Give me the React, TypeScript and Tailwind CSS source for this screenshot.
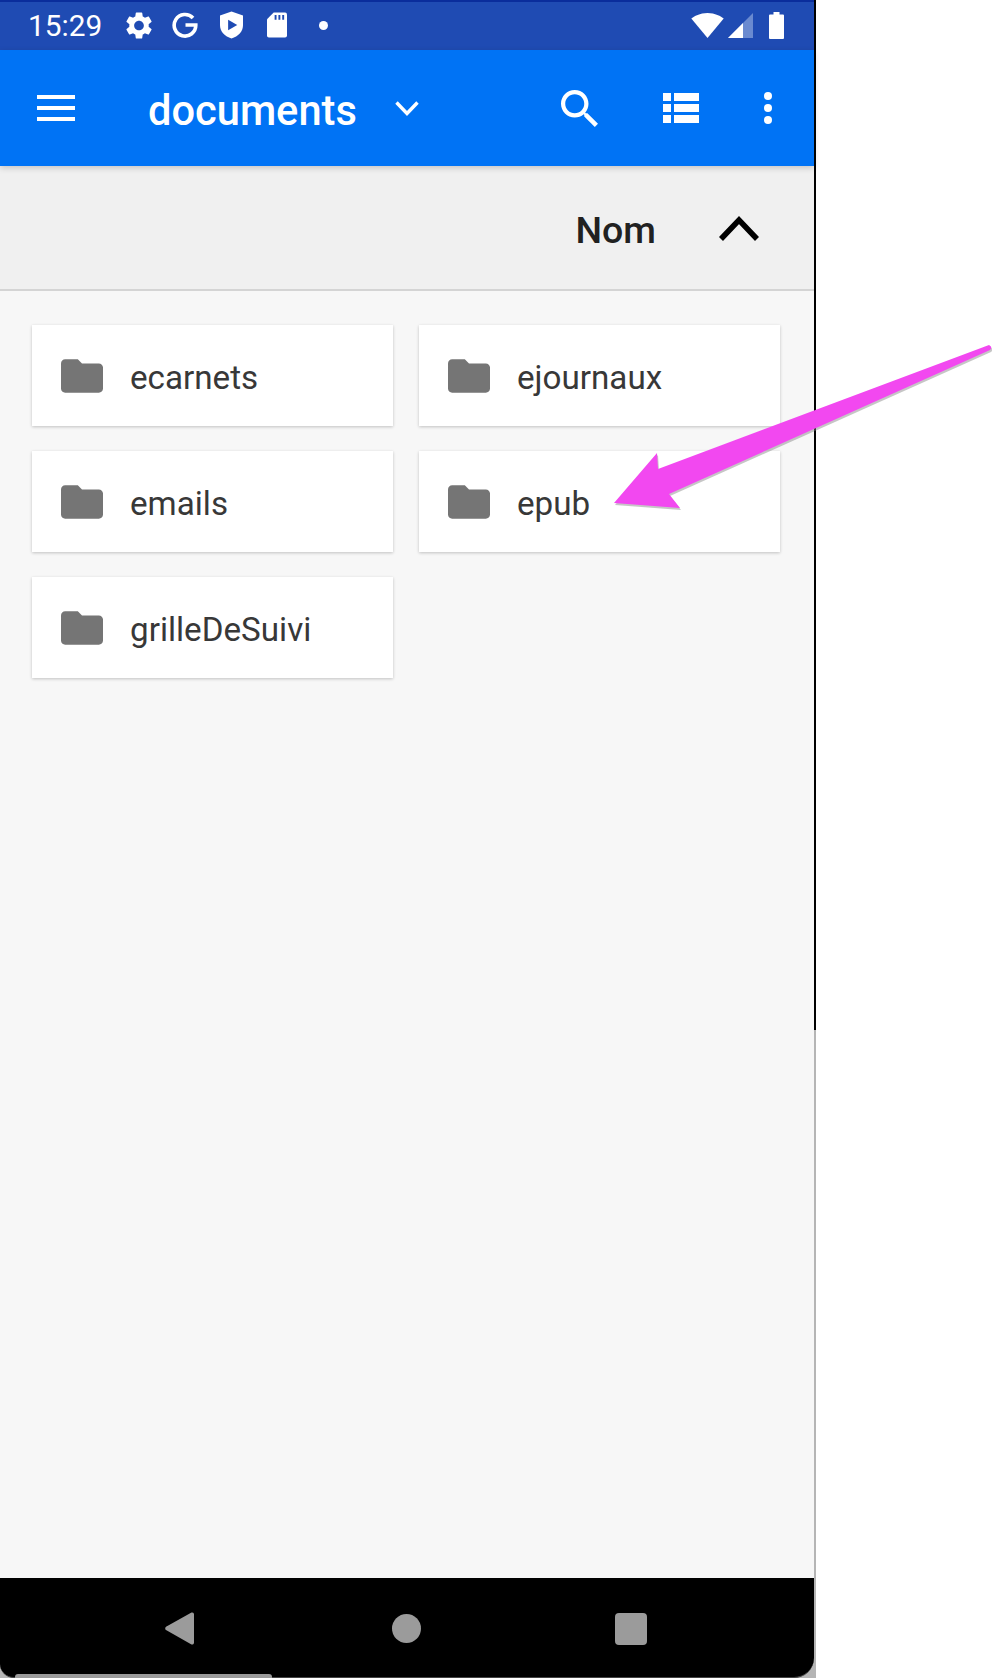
const folders = ['ecarnets', 'ejournaux', 'emails', 'epub', 'grilleDeSuivi'];

function FolderCard({ name }: { name: string }) {
  return (
    <div className="flex h-[101px] items-center bg-white pl-[29px] shadow-[0_1px_3px_rgba(0,0,0,0.22)]">
      <svg viewBox="2 4 20 16" className="h-[34px] w-[42px] shrink-0 fill-[#757575]">
        <path d="M10 4H4c-1.1 0-1.99.9-1.99 2L2 18c0 1.1.9 2 2 2h16c1.1 0 2-.9 2-2V8c0-1.1-.9-2-2-2h-8l-2-2z" />
      </svg>
      <span className="ml-[27px] mt-[4px] text-[33.2px] leading-none text-[#383838]">{name}</span>
    </div>
  );
}

function StatusBar() {
  return (
    <div className="flex h-[50px] items-center border-t-2 border-[#0a2d9c] bg-[#1f4bb3] pb-[2px] pl-[28px] pr-[30px]">
      <span className="mt-[1px] w-[72px] text-[29.8px] leading-none text-white">15:29</span>
      <svg viewBox="2.5 2 19 20" className="ml-[26px] h-[27px] w-[26px] fill-white">
        <path d="M19.14 12.94c.04-.3.06-.61.06-.94 0-.32-.02-.64-.07-.94l2.03-1.58c.18-.14.23-.41.12-.61l-1.92-3.32c-.12-.22-.37-.29-.59-.22l-2.39.96c-.5-.38-1.03-.7-1.62-.94l-.36-2.54c-.04-.24-.24-.41-.48-.41h-3.84c-.24 0-.43.17-.47.41l-.36 2.54c-.59.24-1.13.57-1.62.94l-2.39-.96c-.22-.08-.47 0-.59.22L2.74 8.87c-.12.21-.08.47.12.61l2.03 1.58c-.05.3-.09.63-.09.94s.02.64.07.94l-2.03 1.58c-.18.14-.23.41-.12.61l1.92 3.32c.12.22.37.29.59.22l2.39-.96c.5.38 1.03.7 1.62.94l.36 2.54c.05.24.24.41.48.41h3.84c.24 0 .44-.17.47-.41l.36-2.54c.59-.24 1.13-.56 1.62-.94l2.39.96c.22.08.47 0 .59-.22l1.92-3.32c.12-.22.07-.47-.12-.61l-2.01-1.58zM12 15.6c-1.98 0-3.6-1.62-3.6-3.6s1.62-3.6 3.6-3.6 3.6 1.62 3.6 3.6-1.62 3.6-3.6 3.6z" />
      </svg>
      <svg viewBox="0 0 26 26" className="ml-[20px] h-[26px] w-[26px] fill-none stroke-white stroke-[3.6]">
        <path d="M21 6A10.800 10.800 0 1 0 23.800 13H13.500" />
      </svg>
      <svg viewBox="0 0 24 28" className="ml-[22px] h-[28px] w-[23px]">
        <path d="M12 0 24 4v10c0 7-5 12-12 14C5 26 0 21 0 14V4z" fill="#ffffff" />
        <path d="M8.500 8.500v11l9.500-5.500z" fill="#1f4bb3" />
      </svg>
      <svg viewBox="0 0 21 26" className="ml-[24px] h-[26px] w-[20px]">
        <path d="M7 0h12a2 2 0 0 1 2 2v22a2 2 0 0 1-2 2H2a2 2 0 0 1-2-2V7z" fill="#ffffff" />
        <path d="M8 2.500h2v5H8zM12 2.500h2v5h-2zM16 2.500h2v5h-2z" fill="#1f4bb3" />
      </svg>
      <div className="ml-[31.500px] h-[9px] w-[9px] rounded-full bg-white" />
      <div className="flex-1" />
      <svg viewBox="0 0 33 25" className="h-[25px] w-[33px] fill-white">
        <path d="M16.500 25 0.300 5.500C3 3.300 9 0 16.500 0S30 3.300 32.700 5.500z" />
      </svg>
      <svg viewBox="0 0 25 25" className="ml-[4px] h-[25px] w-[25px]">
        <path d="M0 25 25 0v25z" fill="#6a8ad0" />
        <path d="M0 25 15 10v15z" fill="#ffffff" />
      </svg>
      <svg viewBox="0 0 15 27" className="ml-[16px] h-[27px] w-[15px] fill-white">
        <path d="M4.500 0h6v2.500H14a1 1 0 0 1 1 1V26a1 1 0 0 1-1 1H1a1 1 0 0 1-1-1V3.500a1 1 0 0 1 1-1h3.500z" />
      </svg>
    </div>
  );
}

function Toolbar() {
  return (
    <div className="relative z-10 flex h-[116px] items-center bg-[#0073f5] pl-[37px] pr-[42px] shadow-[0_2px_6px_rgba(0,0,0,0.18)]">
      <div className="flex w-[38px] flex-col gap-[7px]">
        <div className="h-[4px] bg-white" />
        <div className="h-[4px] bg-white" />
        <div className="h-[4px] bg-white" />
      </div>
      <span className="ml-[73px] mt-[6px] text-[41.600px] font-medium leading-none text-white">documents</span>
      <svg viewBox="0 0 24 15" className="ml-[38px] h-[15px] w-[24px] fill-none stroke-white stroke-[3.400]">
        <path d="M1.500 1.500 12 12.500 22.500 1.500" />
      </svg>
      <div className="flex-1" />
      <svg viewBox="3 3 17.500 17.500" className="h-[37px] w-[37px] fill-white">
        <path d="M15.500 14h-.79l-.28-.27C15.410 12.590 16 11.110 16 9.500 16 5.910 13.090 3 9.500 3S3 5.910 3 9.500 5.910 16 9.500 16c1.610 0 3.090-.59 4.230-1.570l.27.28v.79l5 4.990L20.490 19l-4.990-5zm-6 0C7.010 14 5 11.990 5 9.500S7.010 5 9.500 5 14 7.010 14 9.500 11.990 14 9.500 14z" />
      </svg>
      <svg viewBox="0 0 36 30" className="ml-[65px] h-[30px] w-[36px] fill-white">
        <path d="M0 0h8v8H0zM11 0h25v8H11zM0 11h8v8H0zM11 11h25v8H11zM0 22h8v8H0zM11 22h25v8H11z" />
      </svg>
      <div className="ml-[65px] flex flex-col gap-[4px]">
        <div className="h-[8px] w-[8px] rounded-full bg-white" />
        <div className="h-[8px] w-[8px] rounded-full bg-white" />
        <div className="h-[8px] w-[8px] rounded-full bg-white" />
      </div>
    </div>
  );
}

function NavBar() {
  return (
    <div className="relative h-[100px] rounded-bl-[14px] rounded-br-[20px] border-b border-[#444444] bg-black">
      <svg viewBox="0 0 29 33" className="absolute left-[165px] top-[34px] h-[33px] w-[29px] fill-[#9b9b9b]">
        <path d="M26.500 0.500a2 2 0 0 1 2.500 2v28a2 2 0 0 1-2.500 2L1 18a2 2 0 0 1 0-3.200z" />
      </svg>
      <div className="absolute left-[392px] top-[36px] h-[29px] w-[29px] rounded-full bg-[#9b9b9b]" />
      <div className="absolute left-[615px] top-[35px] h-[32px] w-[32px] rounded-[4px] bg-[#9b9b9b]" />
      <div className="absolute bottom-[-1px] left-[15px] h-[4px] w-[257px] rounded-t-[3px] bg-[#9b9b9b]" />
    </div>
  );
}

export default function App() {
  return (
    <div
      className="relative flex h-[1678px] w-[992px] overflow-hidden bg-white"
      style={{ fontFamily: 'Roboto, "Noto Sans", sans-serif' }}
    >
      <div className="flex h-full w-[814px] flex-col bg-[#b5b5b5]">
        <StatusBar />
        <Toolbar />
        <div className="flex h-[125px] items-center justify-end border-b-2 border-[#d4d4d4] bg-[#f0f0f0] pr-[55px]">
          <span className="mt-[7px] text-[37.500px] font-medium leading-none text-[#212121]">Nom</span>
          <svg viewBox="0 0 40 25" className="ml-[63px] mt-[1px] h-[25px] w-[40px] fill-none stroke-black stroke-[5.500]">
            <path d="M2 23 20 4 38 23" />
          </svg>
        </div>
        <div className="grid flex-1 grid-cols-2 content-start gap-x-[26px] gap-y-[25px] bg-[#f7f7f7] pl-[32px] pr-[34px] pt-[34px]">
          {folders.map((name) => (
            <FolderCard key={name} name={name} />
          ))}
        </div>
        <NavBar />
      </div>

      {/* window edge: black at the top, grey further down */}
      <div className="flex h-full flex-col">
        <div className="h-[1030px] w-[1.500px] bg-black" />
        <div className="w-[2px] flex-1 bg-[#b5b5b5]" />
      </div>

      {/* annotation arrow lying over the screenshot */}
      <svg viewBox="0 0 992 1678" className="pointer-events-none absolute left-0 top-0 h-[1678px] w-[992px]">
        <path d="M989 345 Q993 347 990 350 L669 494 L680 508 L614 503 L657 453 L658 469 Z" fill="#808080" opacity="0.45" transform="translate(1 2)" />
        <path d="M989 345 Q993 347 990 350 L669 494 L680 508 L614 503 L657 453 L658 469 Z" fill="#f248f0" />
      </svg>
    </div>
  );
}
